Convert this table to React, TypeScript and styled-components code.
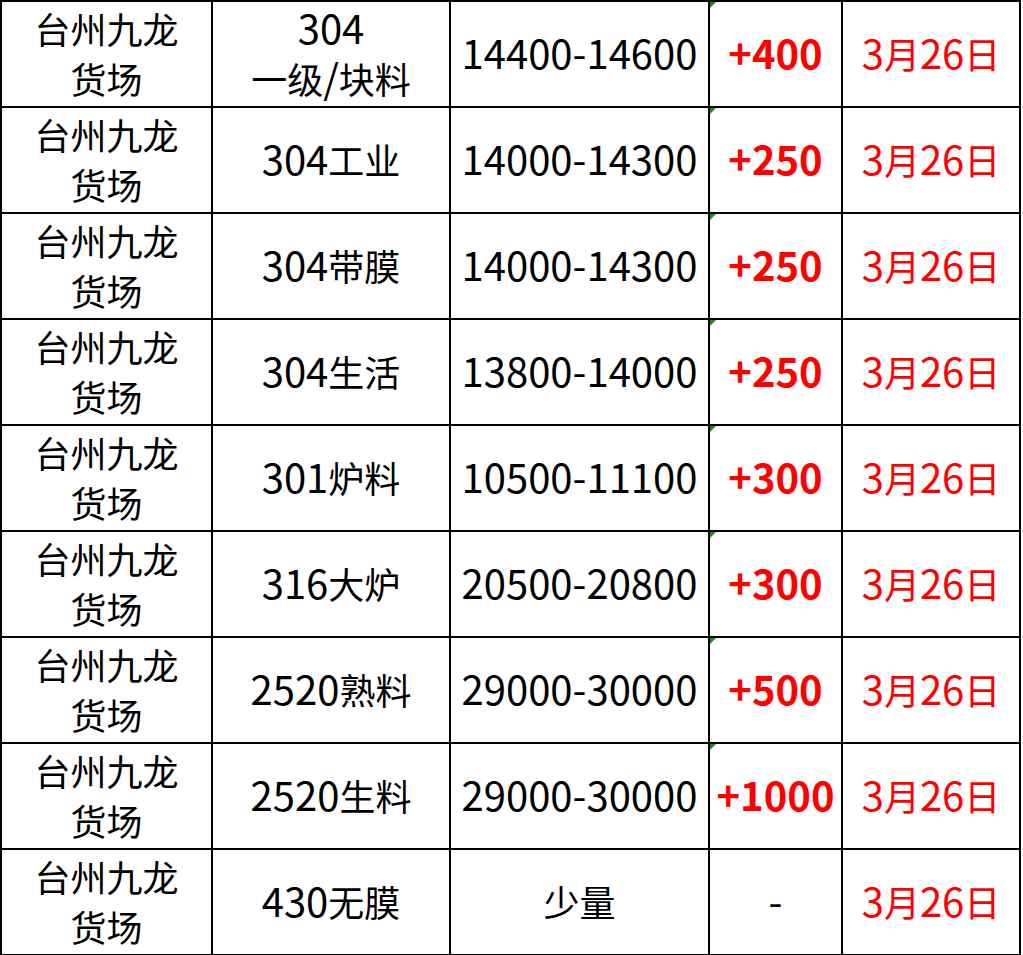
import React from "react";
import styled, { createGlobalStyle } from "styled-components";

const Global = createGlobalStyle`
  html, body { margin: 0; padding: 0; background: #ffffff; }
  body { font-family: "Noto Sans CJK SC", "Noto Sans", sans-serif; }
`;

const Table = styled.table`
  border-collapse: collapse;
  table-layout: fixed;
  width: 1019px;
  margin: 0;
  font-family: "Noto Sans CJK SC", "Noto Sans", sans-serif;
`;

const Col = styled.col<{ $w: number }>`
  width: ${(p) => p.$w}px;
`;

const Row = styled.tr`
  height: 106px;
`;

const Cell = styled.td<{ $tone?: "plain" | "change" | "date" }>`
  position: relative;
  border: 2px solid #000;
  padding: 0 0 3px 0;
  text-align: center;
  vertical-align: middle;
  font-size: 36px;
  line-height: 50px;
  color: ${(p) => (p.$tone === "plain" || !p.$tone ? "#000" : "#ff0000")};
  font-weight: ${(p) => (p.$tone === "change" ? 700 : 400)};
`;

const Latin = styled.span`
  font-size: 40px;
  line-height: 1;
`;

const Flag = styled.span`
  position: absolute;
  left: 0;
  top: 0;
  width: 0;
  height: 0;
  border-top: 6px solid #1f8a1f;
  border-right: 6px solid transparent;
`;

function Mixed({ text }: { text: string }) {
  const parts = text.split(/([\x00-\x7F]+)/);
  return (
    <>
      {parts.map((p, i) =>
        p === "" ? null : i % 2 === 1 ? <Latin key={i}>{p}</Latin> : <React.Fragment key={i}>{p}</React.Fragment>
      )}
    </>
  );
}

type Item = { name: string[]; price: string; change: string; flag: boolean };

const items: Item[] = [
  { name: ["304", "一级/块料"], price: "14400-14600", change: "+400", flag: true },
  { name: ["304工业"], price: "14000-14300", change: "+250", flag: true },
  { name: ["304带膜"], price: "14000-14300", change: "+250", flag: true },
  { name: ["304生活"], price: "13800-14000", change: "+250", flag: true },
  { name: ["301炉料"], price: "10500-11100", change: "+300", flag: true },
  { name: ["316大炉"], price: "20500-20800", change: "+300", flag: true },
  { name: ["2520熟料"], price: "29000-30000", change: "+500", flag: true },
  { name: ["2520生料"], price: "29000-30000", change: "+1000", flag: true },
  { name: ["430无膜"], price: "少量", change: "-", flag: false },
];

export default function App() {
  return (
    <>
      <Global />
      <Table>
        <colgroup>
          <Col $w={211} />
          <Col $w={238} />
          <Col $w={259} />
          <Col $w={133} />
          <Col $w={178} />
        </colgroup>
        <tbody>
          {items.map((it, i) => (
            <Row key={i}>
              <Cell>
                台州九龙
                <br />
                货场
              </Cell>
              <Cell>
                {it.name.map((n, j) => (
                  <React.Fragment key={j}>
                    {j > 0 && <br />}
                    <Mixed text={n} />
                  </React.Fragment>
                ))}
              </Cell>
              <Cell>
                <Mixed text={it.price} />
              </Cell>
              <Cell $tone={it.change === "-" ? "plain" : "change"}>
                {it.flag && <Flag />}
                <Latin>{it.change}</Latin>
              </Cell>
              <Cell $tone="date">
                <Mixed text="3月26日" />
              </Cell>
            </Row>
          ))}
        </tbody>
      </Table>
    </>
  );
}
